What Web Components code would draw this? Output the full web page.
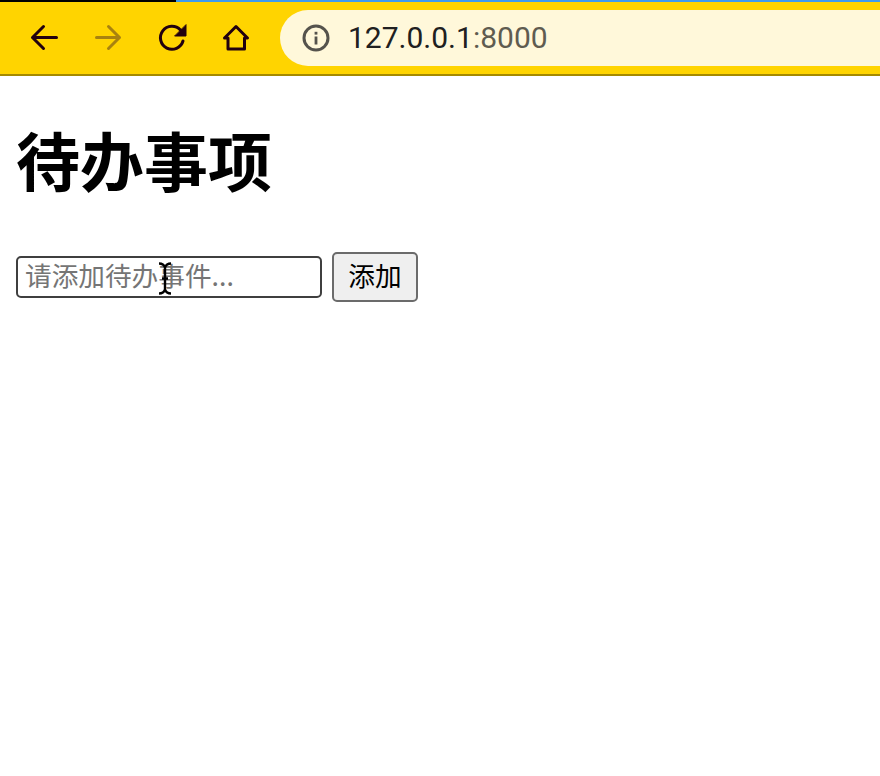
<!DOCTYPE html>
<html lang="zh">
<head>
<meta charset="utf-8">
<title>待办事项</title>
<style>
  html, body { margin: 0; background: #fff; }
  body { font-family: "Liberation Sans", "Noto Sans CJK SC", sans-serif; }
</style>
</head>
<body>
<browser-bar url-host="127.0.0.1" url-port=":8000"></browser-bar>
<todo-page title-text="待办事项" placeholder="请添加待办事件..." button-text="添加"></todo-page>

<script>
// --- Browser chrome ---
class BrowserBar extends HTMLElement {
  constructor() {
    super();
    this.attachShadow({ mode: 'open' });
  }
  connectedCallback() {
    const host = this.getAttribute('url-host') || '';
    const port = this.getAttribute('url-port') || '';
    this.shadowRoot.innerHTML = `
      <style>
        :host { display: block; }
        .progress { display: flex; height: 2px; background: #3d9bf0; }
        .progress i { display: block; width: 176px; background: #000; }
        .toolbar {
          display: flex; align-items: center; height: 72px; box-sizing: border-box;
          padding-left: 24px; background: #ffd400;
        }
        .rule { height: 2px; background: #a58a00; }
        .btn { display: flex; width: 40px; height: 40px; margin-right: 24px; flex: none; }
        .btn svg { width: 40px; height: 40px; fill: none; stroke: #22000f; stroke-width: 3; stroke-linecap: round; stroke-linejoin: round; }
        .btn.off svg { stroke: #a8820f; }
        .url {
          flex: 1; height: 56px; display: flex; align-items: center;
          background: #fff8da; border-radius: 28px 0 0 28px; padding-left: 22px;
        }
        .url svg { width: 28px; height: 28px; flex: none; margin-right: 18px; }
        .text { font: 400 30px/1 Roboto, "Liberation Sans", sans-serif; color: #202020; }
        .text span { color: #5f5c50; }
      </style>
      <div class="progress"><i></i></div>
      <div class="toolbar">
        <div class="btn"><svg viewBox="0 0 40 40"><path d="M32.5 19.5H8.5M19.5 8.5L8.5 19.5 19.5 30.5"/></svg></div>
        <div class="btn off"><svg viewBox="0 0 40 40"><path d="M8.5 19.5H31.5M20.5 8.5L31.5 19.5 20.5 30.5"/></svg></div>
        <div class="btn"><svg viewBox="0 0 40 40"><path d="M31 23a11.5 11.5 0 1 1-2.6-11L31 15"/><path d="M34 7v11H23z" fill="#22000f" stroke-width="1"/></svg></div>
        <div class="btn"><svg viewBox="0 0 40 40"><path d="M8.5 20L20 8.5 31.5 20H28.5V31H12V20z"/></svg></div>
        <div class="url">
          <svg viewBox="0 0 28 28"><circle cx="14" cy="14" r="12" fill="none" stroke="#55534c" stroke-width="3"/><rect x="12.6" y="12.5" width="2.8" height="8" fill="#55534c"/><rect x="12.6" y="7.8" width="2.8" height="2.8" fill="#55534c"/></svg>
          <div class="text">${host}<span>${port}</span></div>
        </div>
      </div>
      <div class="rule"></div>
    `;
  }
}
customElements.define('browser-bar', BrowserBar);

// --- Todo page ---
class TodoPage extends HTMLElement {
  constructor() {
    super();
    this.attachShadow({ mode: 'open' });
  }
  connectedCallback() {
    const title = this.getAttribute('title-text') || '';
    const placeholder = this.getAttribute('placeholder') || '';
    const label = this.getAttribute('button-text') || '';
    this.shadowRoot.innerHTML = `
      <style>
        :host { display: block; padding: 0 16px; font-family: "Liberation Sans", "Noto Sans CJK SC", sans-serif; }
        h1 { margin: 0; padding-top: 38px; font: 700 64px/88px "Noto Sans CJK SC", sans-serif; color: #000; height: 88px; }
        form { display: flex; align-items: center; gap: 10px; margin-top: 50px; width: max-content; position: relative; }
        input {
          box-sizing: border-box; width: 306px; height: 42px; padding: 0 7px 5px; margin: 0;
          border: 2px solid #3f3f3f; border-radius: 5px; background: #fff; outline: none;
          font: 400 26.67px "Noto Sans CJK SC", sans-serif; color: #000;
        }
        input::placeholder { color: #757575; opacity: 1; }
        button {
          box-sizing: border-box; width: 86px; height: 50px; padding: 0 0 5px; margin: 0;
          border: 2px solid #6b6b6b; border-radius: 5px; background: #efefef;
          font: 400 26.67px "Noto Sans CJK SC", sans-serif; color: #000;
        }
        .cursor { position: absolute; left: 142px; top: 10px; width: 14px; height: 33px; pointer-events: none; }
      </style>
      <h1>${title}</h1>
      <form onsubmit="return false">
        <input type="text" placeholder="${placeholder}">
        <button type="button">${label}</button>
        <svg class="cursor" viewBox="0 0 14 33" fill="none" stroke="#000" stroke-width="2.4">
          <path d="M1 1.5c3 0 5 1 6 4 1-3 3-4 6-4M7 5.5v22M4 16.5h6M1 31.5c3 0 5-1 6-4 1 3 3 4 6 4"/>
        </svg>
      </form>
    `;
  }
}
customElements.define('todo-page', TodoPage);
</script>
</body>
</html>
